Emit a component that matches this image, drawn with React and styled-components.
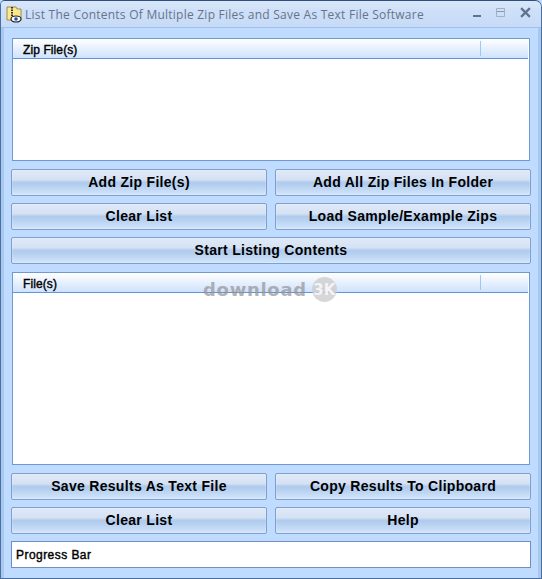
import React from "react";
import styled, { createGlobalStyle } from "styled-components";

const Global = createGlobalStyle`
  html, body { margin: 0; padding: 0; background: #bfdbff; }
  * { box-sizing: border-box; }
  body { font-family: "Liberation Sans", Arial, sans-serif; }
`;

const Win = styled.div`
  position: relative;
  width: 542px;
  height: 579px;
  display: flex;
  flex-direction: column;
  background: #bfdbff;
  border: 1px solid #4a6f9f;
  border-top-color: #2f4f7f;
  border-radius: 5px 7px 0 0;
  overflow: hidden;
`;

const TitleBar = styled.div`
  height: 27px;
  flex: none;
  display: flex;
  align-items: center;
  padding: 0 10px 0 5px;
  background: linear-gradient(#d8e6f8 0, #d3e3f8 7px, #cfe0f9 8px, #c6dbf7 26px);
  border-bottom: 1px solid #9ec2ee;
`;

const AppIcon = styled.svg`
  width: 17px;
  height: 17px;
  flex: none;
  margin-right: 2px;
`;

const Title = styled.div`
  flex: 1;
  font-family: "Open Sans", sans-serif;
  font-size: 12px;
  letter-spacing: 0.24px;
  color: #667489;
  white-space: nowrap;
  padding-top: 1px;
`;

const Controls = styled.div`
  display: flex;
  align-items: center;
  gap: 14px;
  padding-bottom: 3px;
`;

const Ctl = styled.svg`
  width: ${(p) => p.$size || 10}px;
  height: ${(p) => p.$size || 10}px;
  display: block;
`;

const Body = styled.div`
  flex: 1;
  display: flex;
  flex-direction: column;
  padding: 10px 10px 0 10px;
  border-left: 3px solid #a8c8f0;
  border-right: 3px solid #a8c8f0;
`;

const ListBox = styled.div`
  height: ${(p) => p.$h}px;
  flex: none;
  margin: ${(p) => p.$mt || 0}px -2px 0 -2px;
  background: #fff;
  border: 1px solid #6f99d0;
`;

const ListHeader = styled.div`
  height: 20px;
  display: flex;
  align-items: center;
  padding: 2px 0 0 10px;
  position: relative;
  font-size: 12px;
  letter-spacing: 0.1px;
  color: #000;
  -webkit-text-stroke: 0.4px #000;
  background: linear-gradient(#fff, #cfe2fd);
  border-bottom: 1px solid #5f94d8;
  margin-right: 1px;
`;

const HeaderSplit = styled.span`
  position: absolute;
  left: 467px;
  top: 2px;
  bottom: 2px;
  width: 1px;
  background: #9cc7f8;
`;

const Row = styled.div`
  display: grid;
  grid-template-columns: ${(p) => (p.$single ? "1fr" : "1fr 1fr")};
  gap: 8px;
  margin: ${(p) => p.$mt}px -3px 0 -3px;
  flex: none;
`;

const Btn = styled.button`
  height: 27px;
  padding: 0 0 2px;
  font-family: "Liberation Sans", Arial, sans-serif;
  font-weight: 700;
  font-size: 14px;
  letter-spacing: 0.3px;
  color: #000;
  border: 1px solid #7f9fcc;
  border-radius: 2px;
  background: linear-gradient(#dfe9f7 0, #d5e2f4 38%, #b0cbec 50%, #b4cfef 62%, #d4e6fb 100%);
  box-shadow: inset 0 0 0 1px rgba(255, 255, 255, 0.15);
`;

const Status = styled.div`
  height: 27px;
  flex: none;
  margin: 7px -3px 0 -3px;
  padding-left: 4px;
  display: flex;
  align-items: center;
  background: #fff;
  border: 1px solid #6f8fc4;
  font-size: 12px;
  letter-spacing: 0.45px;
  color: #000;
  -webkit-text-stroke: 0.4px #000;
`;

const Watermark = styled.div`
  position: absolute;
  left: 202px;
  top: 276px;
  display: flex;
  align-items: center;
  gap: 5px;
  pointer-events: none;
`;

const WmText = styled.span`
  font-family: "DejaVu Sans", sans-serif;
  font-weight: 700;
  font-size: 18px;
  letter-spacing: 0.7px;
  color: rgba(150, 150, 150, 0.72);
`;

const WmBadge = styled.span`
  width: 25px;
  height: 25px;
  border-radius: 50%;
  background: rgba(205, 205, 205, 0.8);
  color: #f4f4f4;
  font-family: "DejaVu Sans", sans-serif;
  font-weight: 700;
  font-size: 15px;
  display: flex;
  align-items: center;
  justify-content: center;
`;

const Icon = () => (
  <AppIcon viewBox="0 0 17 17">
    <path d="M1 1h9l1 2h4v11H1z" fill="#fbe88a" stroke="#8a7a30" strokeWidth="0.8" />
    <path d="M6 1v9" stroke="#333" strokeWidth="2" strokeDasharray="1.5 1" />
    <ellipse cx="10" cy="13" rx="5" ry="3" fill="#fff" stroke="#222" strokeWidth="1.2" />
    <circle cx="10" cy="13" r="1.8" fill="#1f4fb0" />
  </AppIcon>
);

export default function App() {
  return (
    <>
      <Global />
      <Win>
        <TitleBar>
          <Icon />
          <Title>List The Contents Of Multiple Zip Files and Save As Text File Software</Title>
          <Controls>
            <Ctl viewBox="0 0 10 10">
              <path d="M1 7h8v2H1z" fill="#5f7390" />
            </Ctl>
            <Ctl viewBox="0 0 10 10">
              <path d="M.5.5h8v8h-8z" fill="none" stroke="#a3b0c2" />
              <path d="M1 3h7v1H1z" fill="#8b99ad" />
            </Ctl>
            <Ctl viewBox="0 0 10 10" $size={11}>
              <path d="M1 1l8 8M9 1l-8 8" stroke="#5f7390" strokeWidth="2" />
            </Ctl>
          </Controls>
        </TitleBar>
        <Body>
          <ListBox $h={123}>
            <ListHeader>
              Zip File(s)
              <HeaderSplit />
            </ListHeader>
          </ListBox>
          <Row $mt={8}>
            <Btn>Add Zip File(s)</Btn>
            <Btn>Add All Zip Files In Folder</Btn>
          </Row>
          <Row $mt={7}>
            <Btn>Clear List</Btn>
            <Btn>Load Sample/Example Zips</Btn>
          </Row>
          <Row $mt={7} $single>
            <Btn>Start Listing Contents</Btn>
          </Row>
          <ListBox $h={193} $mt={8}>
            <ListHeader>
              File(s)
              <HeaderSplit />
            </ListHeader>
          </ListBox>
          <Row $mt={8}>
            <Btn>Save Results As Text File</Btn>
            <Btn>Copy Results To Clipboard</Btn>
          </Row>
          <Row $mt={7}>
            <Btn>Clear List</Btn>
            <Btn>Help</Btn>
          </Row>
          <Status>Progress Bar</Status>
        </Body>
        <Watermark>
          <WmText>download</WmText>
          <WmBadge>3K</WmBadge>
        </Watermark>
      </Win>
    </>
  );
}
